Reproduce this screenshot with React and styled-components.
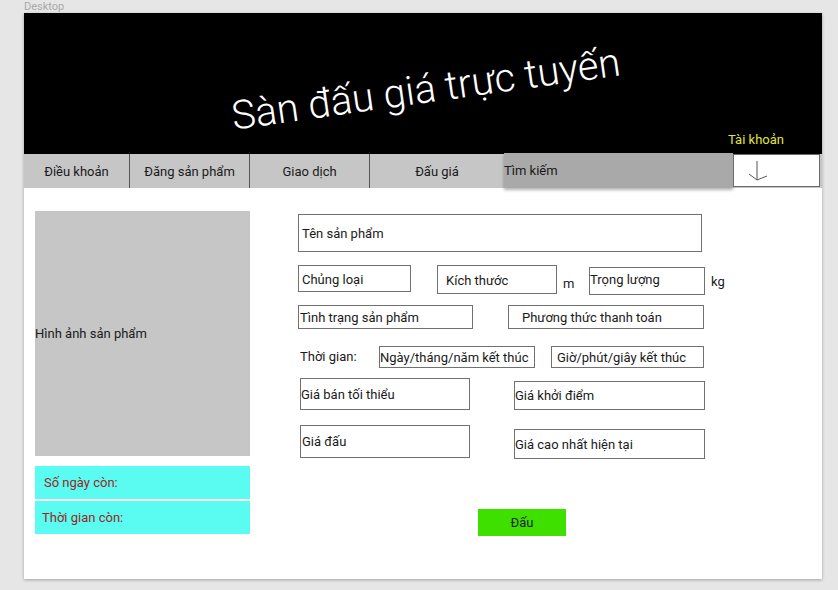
import styled, { createGlobalStyle } from "styled-components";

const GlobalStyle = createGlobalStyle`
  html, body {
    margin: 0;
    padding: 0;
    background-color: #e6e6e6;
    font-family: Roboto, "Noto Sans", sans-serif;
    color: #1a1a1a;
  }
`;

const Page = styled.div`
  width: 838px;
  height: 590px;
  overflow: hidden;
`;

const BoardLabel = styled.div`
  height: 13px;
  padding-left: 24px;
  font-size: 11px;
  line-height: 13px;
  color: #a9a9a9;
`;

const Artboard = styled.div`
  margin-left: 24px;
  width: 798px;
  height: 566px;
  background-color: #fff;
  box-shadow: 0 1px 3px rgba(0, 0, 0, 0.3);
  display: flex;
  flex-direction: column;
`;

const Header = styled.header`
  height: 141px;
  background-color: #000;
  display: flex;
  flex-direction: column;
`;

const Title = styled.h1`
  margin: 53px 0 0 0;
  padding-left: 6px;
  text-align: center;
  font-size: 40px;
  line-height: 48px;
  font-weight: 300;
  color: #fff;
  transform: rotate(-8deg);
`;

const Account = styled.div`
  margin-top: auto;
  padding: 0 38px 6px 0;
  text-align: right;
  font-size: 13px;
  line-height: 16px;
  color: #e4e43c;
`;

const Nav = styled.nav`
  height: 34px;
  display: flex;
  background-color: #c6c6c6;
`;

const NavItem = styled.div`
  width: ${(p) => p.$w}px;
  display: flex;
  align-items: center;
  justify-content: center;
  font-size: 13px;
  border-right: ${(p) => (p.$sep ? "1px solid #555" : "none")};
  box-sizing: border-box;
`;

const Search = styled.div`
  width: 229px;
  margin-top: -1px;
  display: flex;
  align-items: center;
  font-size: 13px;
  background-color: #a9a9a9;
  box-shadow: 0 2px 3px rgba(0, 0, 0, 0.3);
`;

const Dropdown = styled.div`
  width: 87px;
  height: 33px;
  box-sizing: border-box;
  border: 1px solid #6a6a6a;
  background-color: #fff;
  display: flex;
  align-items: center;
  padding-left: 14px;
`;

const Body = styled.main`
  display: flex;
  align-items: flex-start;
`;

const LeftCol = styled.div`
  width: 215px;
  margin-left: 11px;
  padding-top: 23px;
  display: flex;
  flex-direction: column;
`;

const ImageBox = styled.div`
  height: 245px;
  background-color: #c6c6c6;
  display: flex;
  align-items: center;
  font-size: 13px;
  margin-bottom: 10px;
`;

const InfoBox = styled.div`
  height: 33px;
  margin-bottom: 2px;
  padding-left: ${(p) => p.$pl}px;
  background-color: #5afcf1;
  display: flex;
  align-items: center;
  font-size: 13px;
  color: #9c2626;
`;

const RightCol = styled.div`
  margin-left: 48px;
  padding-top: 26px;
  display: flex;
  flex-direction: column;
`;

const Row = styled.div`
  display: flex;
  align-items: flex-start;
  margin-top: ${(p) => p.$mt || 0}px;
`;

const Field = styled.div`
  box-sizing: border-box;
  width: ${(p) => p.$w}px;
  height: ${(p) => p.$h}px;
  margin-left: ${(p) => p.$ml || 0}px;
  margin-top: ${(p) => p.$mt || 0}px;
  padding-left: ${(p) => (p.$pl === undefined ? 3 : p.$pl)}px;
  padding-top: ${(p) => p.$pt || 0}px;
  border: 1px solid #717171;
  display: flex;
  align-items: ${(p) => (p.$top ? "flex-start" : "center")};
  font-size: 13px;
  white-space: nowrap;
`;

const Unit = styled.span`
  width: ${(p) => p.$w}px;
  margin-left: ${(p) => p.$ml}px;
  margin-top: ${(p) => p.$mt}px;
  font-size: 13px;
`;

const Label = styled.span`
  width: 79px;
  margin-left: 2px;
  font-size: 13px;
  line-height: 22px;
`;

const BidButton = styled.button`
  width: 88px;
  height: 27px;
  margin: 50px 0 0 180px;
  border: none;
  background-color: #3ee000;
  font-family: inherit;
  font-size: 13px;
  color: #222;
  padding: 0;
`;

const DownArrow = () => (
  <svg width="22" height="22" viewBox="0 0 22 22" fill="none">
    <path d="M9 1 L9 20" stroke="#555" strokeWidth="1" />
    <path d="M1 14 L9 20 L19 16" stroke="#555" strokeWidth="1" />
  </svg>
);

export default function App() {
  return (
    <Page>
      <GlobalStyle />
      <BoardLabel>Desktop</BoardLabel>
      <Artboard>
        <Header>
          <Title>Sàn đấu giá trực tuyến</Title>
          <Account>Tài khoản</Account>
        </Header>
        <Nav>
          <NavItem $w={106} $sep>Điều khoản</NavItem>
          <NavItem $w={120} $sep>Đăng sản phẩm</NavItem>
          <NavItem $w={120} $sep>Giao dịch</NavItem>
          <NavItem $w={134}>Đấu giá</NavItem>
          <Search>Tìm kiếm</Search>
          <Dropdown>
            <DownArrow />
          </Dropdown>
        </Nav>
        <Body>
          <LeftCol>
            <ImageBox>Hình ảnh sản phẩm</ImageBox>
            <InfoBox $pl={9}>Số ngày còn:</InfoBox>
            <InfoBox $pl={7}>Thời gian còn:</InfoBox>
          </LeftCol>
          <RightCol>
            <Row>
              <Field $w={404} $h={38}>Tên sản phẩm</Field>
            </Row>
            <Row $mt={13}>
              <Field $w={113} $h={27} $pt={2}>Chủng loại</Field>
              <Field $w={120} $h={29} $ml={26} $pl={8} $pt={1}>Kích thước</Field>
              <Unit $w={26} $ml={6} $mt={11}>m</Unit>
              <Field $w={116} $h={28} $mt={2} $pl={0} $pt={4} $top>Trọng lượng</Field>
              <Unit $w={20} $ml={6} $mt={9}>kg</Unit>
            </Row>
            <Row $mt={10}>
              <Field $w={175} $h={24} $pl={1}>Tình trạng sản phẩm</Field>
              <Field $w={196} $h={24} $ml={35} $pl={13}>Phương thức thanh toán</Field>
            </Row>
            <Row $mt={17}>
              <Label>Thời gian:</Label>
              <Field $w={156} $h={22} $pl={0}>Ngày/tháng/năm kết thúc</Field>
              <Field $w={153} $h={22} $ml={16} $pl={5}>Giờ/phút/giây kết thúc</Field>
            </Row>
            <Row $mt={10}>
              <Field $w={170} $h={32} $ml={2} $pl={0}>Giá bán tối thiểu</Field>
              <Field $w={191} $h={29} $ml={44} $mt={3} $pl={0}>Giá khởi điểm</Field>
            </Row>
            <Row $mt={15}>
              <Field $w={170} $h={33} $ml={2} $pl={1}>Giá đấu</Field>
              <Field $w={191} $h={30} $ml={44} $mt={4} $pl={0}>Giá cao nhất hiện tại</Field>
            </Row>
            <Row>
              <BidButton>Đấu</BidButton>
            </Row>
          </RightCol>
        </Body>
      </Artboard>
    </Page>
  );
}
